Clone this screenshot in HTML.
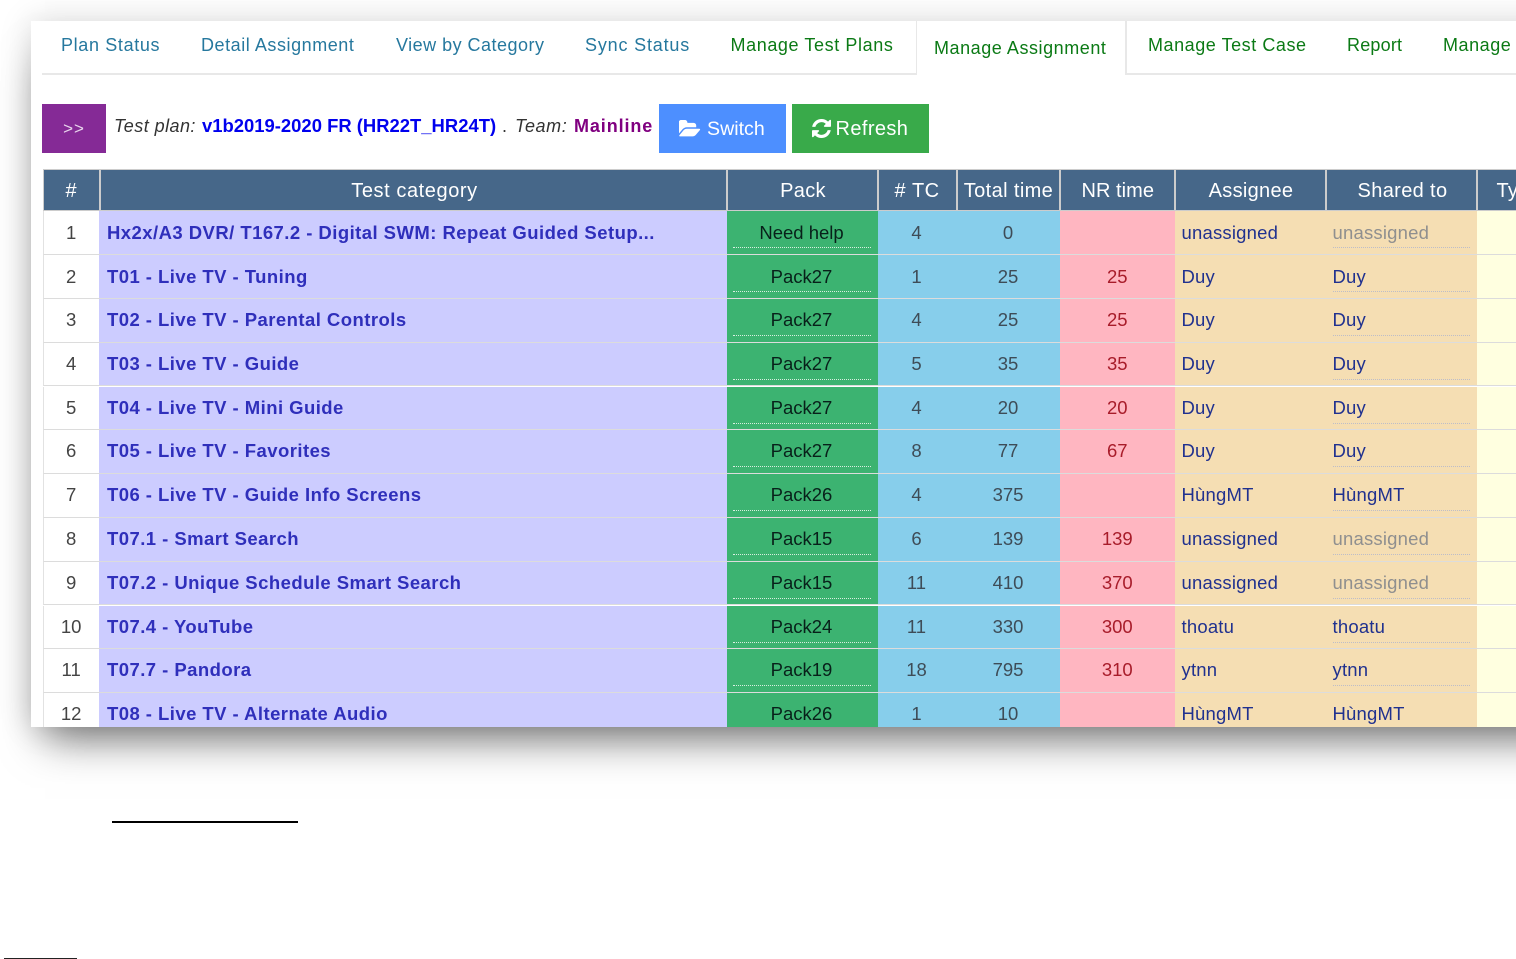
<!DOCTYPE html>
<html><head><meta charset="utf-8"><style>
html,body{margin:0;padding:0;width:1516px;height:959px;overflow:hidden;background:#fff}
body{font-family:"Liberation Sans",Arial,sans-serif;position:relative}
.card{position:absolute;left:31px;top:21px;width:1600px;height:706px;background:#fff;box-shadow:0 26px 40px -14px rgba(0,0,0,.52),0 0 30px rgba(0,0,0,.15)}
.wrap{position:absolute;left:0;top:0;width:1547px;height:727px;clip-path:inset(21px 0 0 31px);filter:blur(.3px)}
.t{position:absolute;top:33px;font-size:18px;line-height:24px;white-space:nowrap;letter-spacing:.55px}
.b{color:#26789e}.g{color:#0b7a15}
.l{position:absolute;background:#e8e8e8}
.bar{position:absolute;top:115px;font-size:18px;line-height:22px;white-space:nowrap}
.btn{position:absolute;top:104px;height:49px;color:#fff;font-size:20px;line-height:50px;white-space:nowrap}
.hd{position:absolute;top:169px;height:42px;background:#466789;color:#fff;font-size:20px;line-height:42px;text-align:center;box-sizing:border-box;border-top:1px solid #ccc;border-bottom:1px solid #ccc;border-right:2px solid #ccc;white-space:nowrap;letter-spacing:.3px}
.r{position:absolute;left:43px;width:1500px;height:43.8px;font-size:18.5px}
.r>div{position:absolute;top:0;height:100%;line-height:42.8px;white-space:nowrap;box-sizing:border-box;border-bottom:1.6px solid #dcdcdc}
.r.dn>div{line-height:44.4px}
.r.up>div{line-height:41.6px}
.r>div:nth-child(1){left:0;width:56.3px;background:#fff;color:#444;text-align:center;border-left:1.5px solid #e2e2e2;padding-right:1px}
.r>div:nth-child(2){left:56.3px;width:627.7px;background:#ccf;color:#2f2fbb;font-weight:bold;padding-left:7.7px;letter-spacing:.45px}
.r>div:nth-child(3){left:684px;width:150.5px;background:#3cb371;color:#08201a;text-align:center;padding-right:1.5px}
.r>div:nth-child(4){left:834.5px;width:79px;background:#87ceeb;color:#3e4c57;text-align:center;padding-right:1px}
.r>div:nth-child(5){left:913.5px;width:103px;background:#87ceeb;color:#3e4c57;text-align:center}
.r>div:nth-child(6){left:1016.5px;width:115.5px;background:#ffb6c1;color:#a81c2a;text-align:center}
.r>div:nth-child(7){left:1132px;width:151px;background:#f5deb3;color:#20318f;padding-left:6.5px;letter-spacing:.2px}
.r>div:nth-child(8){left:1283px;width:151px;background:#f5deb3;color:#20318f;padding-left:6.5px;letter-spacing:.2px}
.r>div:nth-child(9){left:1434px;width:66px;background:#ffffe0}
.r>div:nth-child(3)::after{content:"";position:absolute;left:6px;right:6.5px;top:36px;border-bottom:1px dotted #d8eee0}
.r>div:nth-child(8)::after{content:"";position:absolute;left:7px;right:7px;top:36px;border-bottom:1px dotted #bdbdc8}
.r>div:nth-child(8).u{color:#8f8f8f}
</style></head><body>
<div class="card"></div>
<div class="wrap">
<div style="position:absolute;left:31px;top:21px;width:1490px;height:706px;background:#fff"></div>

<div class="t b" style="left:61px;letter-spacing:.65px">Plan Status</div>
<div class="t b" style="left:201px">Detail Assignment</div>
<div class="t b" style="left:396px;letter-spacing:.48px">View by Category</div>
<div class="t b" style="left:585px;letter-spacing:.82px">Sync Status</div>
<div class="t g" style="left:730.5px;letter-spacing:.6px">Manage Test Plans</div>
<div class="t g" style="left:934px;top:36px">Manage Assignment</div>
<div class="t g" style="left:1148px">Manage Test Case</div>
<div class="t g" style="left:1347px;letter-spacing:.2px">Report</div>
<div class="t g" style="left:1443px">Manage</div>
<div class="l" style="left:42px;top:73px;width:875px;height:1.5px"></div>
<div class="l" style="left:915.5px;top:21px;width:1.5px;height:53.5px"></div>
<div class="l" style="left:1125px;top:21px;width:1.5px;height:53.5px"></div>
<div class="l" style="left:1125px;top:73px;width:400px;height:1.5px"></div>

<div style="position:absolute;left:42px;top:104px;width:64px;height:49px;background:#852a96;color:#e8d5ec;font-size:17px;line-height:50px;text-align:center;letter-spacing:1px">&gt;&gt;</div>
<div class="bar" style="left:114px;color:#333;font-style:italic;letter-spacing:.45px">Test plan:</div>
<div class="bar" style="left:202px;color:#0000ee;font-weight:bold;font-size:18.45px">v1b2019-2020 FR (HR22T_HR24T)</div>
<div class="bar" style="left:502px;color:#333">.</div>
<div class="bar" style="left:515px;color:#333;font-style:italic;letter-spacing:.6px">Team:</div>
<div class="bar" style="left:574px;color:#800080;font-weight:bold;letter-spacing:.9px">Mainline</div>

<div class="btn" style="left:659px;width:127px;background:#4d8fff">
<svg style="position:absolute;left:20px;top:16px" width="22" height="18" viewBox="0 0 1920 1536"><path fill="#fff" transform="translate(0 -128)" d="M1845 931q0 35-53 93l-336 396q-43 51-120.5 86.5t-143.5 35.5h-1088q-34 0-60.5-13t-26.5-43q0-35 53-93l336-396q43-51 120.5-86.5t143.5-35.5h1088q34 0 60.5 13t26.5 43zm-343-344v160h-832q-94 0-197 47.5t-164 119.5l-337 396-5 6q0-4-.5-12.5t-.5-12.5v-960q0-92 66-158t158-66h320q92 0 158 66t66 158v32h544q92 0 158 66t66 158z"/></svg>
<span style="position:absolute;left:48px;font-size:19.6px">Switch</span></div>
<div class="btn" style="left:791.5px;width:137px;background:#39aa4a">
<svg style="position:absolute;left:20px;top:15px" width="19" height="19" viewBox="128 128 1536 1536"><path fill="#fff" d="M1639 1056q0 5-1 7-64 268-268 434.5t-478 166.5q-146 0-282.5-55t-243.5-157l-129 129q-19 19-45 19t-45-19-19-45v-448q0-26 19-45t45-19h448q26 0 45 19t19 45-19 45l-137 137q71 66 161 102t187 36q134 0 250-65t186-179q11-17 53-117 8-23 30-23h192q13 0 22.5 9.5t9.5 22.5zm25-800v448q0 26-19 45t-45 19h-448q-26 0-45-19t-19-45 19-45l138-138q-148-137-349-137-134 0-250 65t-186 179q-11 17-53 117-8 23-30 23h-199q-13 0-22.5-9.5t-9.5-22.5v-7q65-268 270-434.5t480-166.5q146 0 284 55.5t245 156.5l130-129q19-19 45-19t45 19 19 45z"/></svg>
<span style="position:absolute;left:44px;letter-spacing:.4px">Refresh</span></div>

<div class="hd" style="left:43px;width:57.5px;border-left:1px solid #ccc">#</div>
<div class="hd" style="left:100.5px;width:627px;letter-spacing:.58px;padding-left:3px">Test category</div>
<div class="hd" style="left:727.5px;width:151px;padding-left:2px">Pack</div>
<div class="hd" style="left:878.5px;width:79px;letter-spacing:.4px">#&nbsp;TC</div>
<div class="hd" style="left:957.5px;width:103px;letter-spacing:.38px;padding-left:1px">Total time</div>
<div class="hd" style="left:1060.5px;width:115px;padding-left:1.5px;letter-spacing:.05px">NR time</div>
<div class="hd" style="left:1175.5px;width:151px;padding-left:2px">Assignee</div>
<div class="hd" style="left:1326.5px;width:151px;letter-spacing:.35px;padding-left:3px">Shared to</div>
<div class="hd" style="left:1477.5px;width:70px;text-align:left;padding-left:19px;border-right:0">Type</div>

<div class="r dn" style="top:211.3px"><div>1</div><div>Hx2x/A3 DVR/ T167.2 - Digital SWM: Repeat Guided Setup...</div><div>Need help</div><div>4</div><div>0</div><div></div><div>unassigned</div><div class="u">unassigned</div><div></div></div>
<div class="r dn" style="top:255.1px"><div>2</div><div>T01 - Live TV - Tuning</div><div>Pack27</div><div>1</div><div>25</div><div>25</div><div>Duy</div><div>Duy</div><div></div></div>
<div class="r" style="top:298.9px"><div>3</div><div>T02 - Live TV - Parental Controls</div><div>Pack27</div><div>4</div><div>25</div><div>25</div><div>Duy</div><div>Duy</div><div></div></div>
<div class="r" style="top:342.7px"><div>4</div><div>T03 - Live TV - Guide</div><div>Pack27</div><div>5</div><div>35</div><div>35</div><div>Duy</div><div>Duy</div><div></div></div>
<div class="r" style="top:386.5px"><div>5</div><div>T04 - Live TV - Mini Guide</div><div>Pack27</div><div>4</div><div>20</div><div>20</div><div>Duy</div><div>Duy</div><div></div></div>
<div class="r" style="top:430.3px"><div>6</div><div>T05 - Live TV - Favorites</div><div>Pack27</div><div>8</div><div>77</div><div>67</div><div>Duy</div><div>Duy</div><div></div></div>
<div class="r" style="top:474.1px"><div>7</div><div>T06 - Live TV - Guide Info Screens</div><div>Pack26</div><div>4</div><div>375</div><div></div><div>HùngMT</div><div>HùngMT</div><div></div></div>
<div class="r" style="top:517.9px"><div>8</div><div>T07.1 - Smart Search</div><div>Pack15</div><div>6</div><div>139</div><div>139</div><div>unassigned</div><div class="u">unassigned</div><div></div></div>
<div class="r" style="top:561.7px"><div>9</div><div>T07.2 - Unique Schedule Smart Search</div><div>Pack15</div><div>11</div><div>410</div><div>370</div><div>unassigned</div><div class="u">unassigned</div><div></div></div>
<div class="r up" style="top:605.5px"><div>10</div><div>T07.4 - YouTube</div><div>Pack24</div><div>11</div><div>330</div><div>300</div><div>thoatu</div><div>thoatu</div><div></div></div>
<div class="r" style="top:649.3px"><div>11</div><div>T07.7 - Pandora</div><div>Pack19</div><div>18</div><div>795</div><div>310</div><div>ytnn</div><div>ytnn</div><div></div></div>
<div class="r" style="top:693.1px"><div>12</div><div>T08 - Live TV - Alternate Audio</div><div>Pack26</div><div>1</div><div>10</div><div></div><div>HùngMT</div><div>HùngMT</div><div></div></div>
</div>

<div style="position:absolute;left:112px;top:821px;width:186px;height:2px;background:#000"></div>
<div style="position:absolute;left:4px;top:958px;width:73px;height:1px;background:#222"></div>
</body></html>
